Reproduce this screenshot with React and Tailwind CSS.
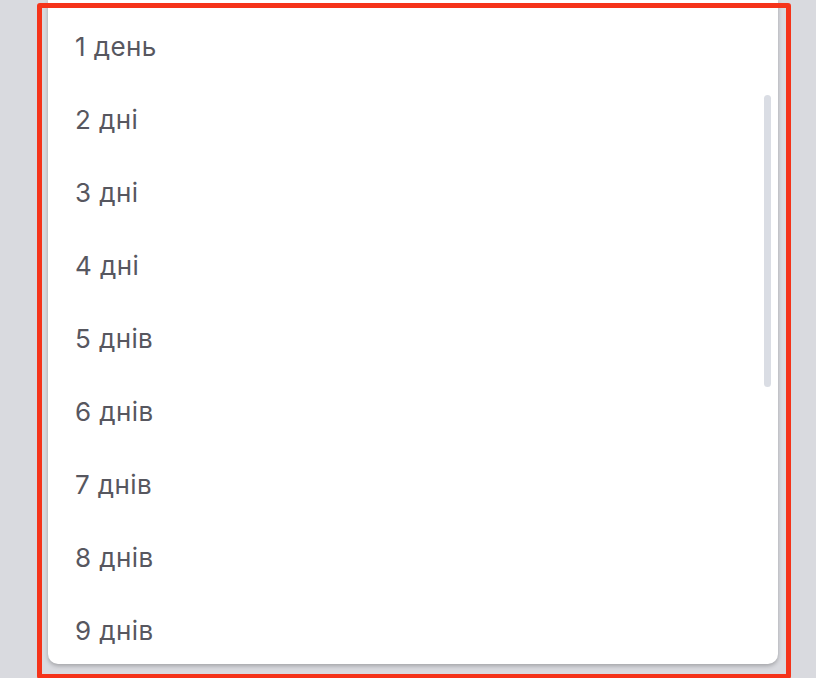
import React from "react";

const days = [
  "1 день",
  "2 дні",
  "3 дні",
  "4 дні",
  "5 днів",
  "6 днів",
  "7 днів",
  "8 днів",
  "9 днів",
];

const App = () => {
  return (
    <div className="relative h-[678px] w-[816px] overflow-hidden bg-[#d9dadf] font-['Inter','Noto_Sans',sans-serif]">
      <div className="ml-[48px] flex h-[664px] w-[730px] overflow-hidden rounded-b-[10px] bg-white shadow-[0_2px_4px_rgba(0,0,0,0.25)]">
        {/* options list */}
        <ul className="flex-1 pt-[10px]">
          {days.map((d) => (
            <li
              key={d}
              className="flex h-[73px] items-center pl-[27px] text-[26px] leading-none tracking-[0.4px] text-[#57575f]"
            >
              {d}
            </li>
          ))}
        </ul>
        <div className="w-[14px] pt-[95px]">
          <div className="h-[292px] w-[7px] rounded-full bg-[#dadde4]" />
        </div>
      </div>

      {/* highlight frame */}
      <div className="pointer-events-none absolute left-[37px] top-[3px] h-[676px] w-[754px] rounded-[3px] border-[5px] border-[#f5331a]" />
    </div>
  );
};

export default App;
